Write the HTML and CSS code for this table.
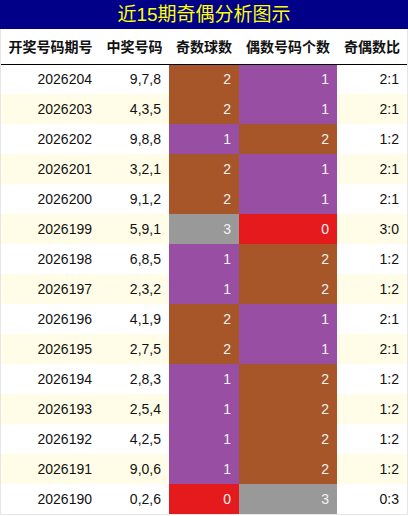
FILE: index.html
```html
<!DOCTYPE html>
<html lang="zh-CN">
<head>
    <meta charset="UTF-8">
    <title>近15期奇偶分析图示</title>
    <link rel="stylesheet" href="styles.css">
</head>
<body>

<div class="chart">
    <div class="title">近15期奇偶分析图示</div>
    <table class="grid">
        <colgroup>
            <col class="c-issue">
            <col class="c-nums">
            <col class="c-odd">
            <col class="c-even">
            <col class="c-ratio">
        </colgroup>
        <thead>
            <tr>
                <th>开奖号码期号</th>
                <th>中奖号码</th>
                <th>奇数球数</th>
                <th>偶数号码个数</th>
                <th>奇偶数比</th>
            </tr>
        </thead>
        <tbody>
            <tr><td>2026204</td><td>9,7,8</td><td class="v2">2</td><td class="v1">1</td><td>2:1</td></tr>
            <tr><td>2026203</td><td>4,3,5</td><td class="v2">2</td><td class="v1">1</td><td>2:1</td></tr>
            <tr><td>2026202</td><td>9,8,8</td><td class="v1">1</td><td class="v2">2</td><td>1:2</td></tr>
            <tr><td>2026201</td><td>3,2,1</td><td class="v2">2</td><td class="v1">1</td><td>2:1</td></tr>
            <tr><td>2026200</td><td>9,1,2</td><td class="v2">2</td><td class="v1">1</td><td>2:1</td></tr>
            <tr><td>2026199</td><td>5,9,1</td><td class="v3">3</td><td class="v0">0</td><td>3:0</td></tr>
            <tr><td>2026198</td><td>6,8,5</td><td class="v1">1</td><td class="v2">2</td><td>1:2</td></tr>
            <tr><td>2026197</td><td>2,3,2</td><td class="v1">1</td><td class="v2">2</td><td>1:2</td></tr>
            <tr><td>2026196</td><td>4,1,9</td><td class="v2">2</td><td class="v1">1</td><td>2:1</td></tr>
            <tr><td>2026195</td><td>2,7,5</td><td class="v2">2</td><td class="v1">1</td><td>2:1</td></tr>
            <tr><td>2026194</td><td>2,8,3</td><td class="v1">1</td><td class="v2">2</td><td>1:2</td></tr>
            <tr><td>2026193</td><td>2,5,4</td><td class="v1">1</td><td class="v2">2</td><td>1:2</td></tr>
            <tr><td>2026192</td><td>4,2,5</td><td class="v1">1</td><td class="v2">2</td><td>1:2</td></tr>
            <tr><td>2026191</td><td>9,0,6</td><td class="v1">1</td><td class="v2">2</td><td>1:2</td></tr>
            <tr><td>2026190</td><td>0,2,6</td><td class="v0">0</td><td class="v3">3</td><td>0:3</td></tr>
        </tbody>
    </table>
</div>

</body>
</html>
```

FILE: styles.css
```css
* {
    box-sizing: border-box;
    margin: 0;
    padding: 0;
}

body {
    font-family: 'Liberation Sans', Arial, 'Noto Sans CJK SC', sans-serif;
    background-color: #fff;
    width: 408px;
}

.chart {
    width: 408px;
    border: 1px solid #e6e6e6;
    border-top: none;
}

.title {
    height: 29px;
    line-height: 29px;
    background-color: #000088;
    color: #ffff00;
    font-size: 19px;
    text-align: center;
    margin: 0 -1px;
}

.grid {
    width: 100%;
    border-collapse: collapse;
    table-layout: fixed;
}

.c-issue { width: 99px; }
.c-nums { width: 69px; }
.c-odd { width: 70px; }
.c-even { width: 98px; }
.c-ratio { width: 70px; }

th {
    height: 35px;
    font-size: 14px;
    font-weight: bold;
    color: #111;
    text-align: center;
    border-bottom: 1px solid #000;
    white-space: nowrap;
}

td {
    height: 30px;
    font-size: 14px;
    color: #111;
    text-align: right;
    padding-right: 8px;
}

tbody tr:nth-child(even) {
    background-color: #fffde7;
}

.v0 { background-color: #e41a1c; color: #f2f2f2; }
.v1 { background-color: #984ea3; color: #f2f2f2; }
.v2 { background-color: #a65628; color: #f2f2f2; }
.v3 { background-color: #999999; color: #f2f2f2; }
```
